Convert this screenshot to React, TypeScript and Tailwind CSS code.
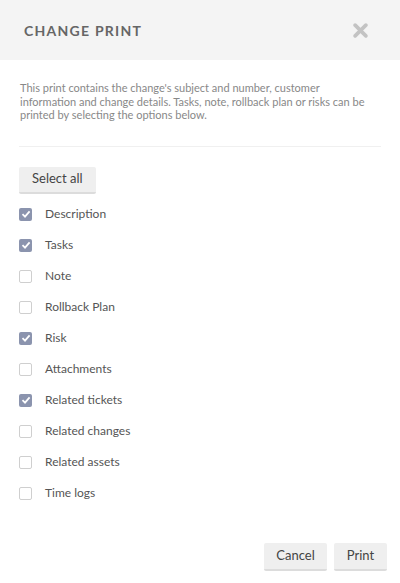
import { useState } from 'react';

const OPTIONS = [
  { label: 'Description', checked: true },
  { label: 'Tasks', checked: true },
  { label: 'Note', checked: false },
  { label: 'Rollback Plan', checked: false },
  { label: 'Risk', checked: true },
  { label: 'Attachments', checked: false },
  { label: 'Related tickets', checked: true },
  { label: 'Related changes', checked: false },
  { label: 'Related assets', checked: false },
  { label: 'Time logs', checked: false },
];

function Check({ on }: { on: boolean }) {
  return on ? (
    <span className="w-[13px] h-[13px] rounded-[2px] bg-[#8b94ae] flex items-center justify-center">
      <svg width="10" height="10" viewBox="0 0 10 10">
        <path d="M1.5 5.2 L4 7.6 L8.6 2.4" fill="none" stroke="white" strokeWidth="1.8" />
      </svg>
    </span>
  ) : (
    <span className="w-[13px] h-[13px] rounded-[2px] border border-[#cfcfcf] bg-white" />
  );
}

export default function App() {
  const [checked, setChecked] = useState(OPTIONS.map((o) => o.checked));

  return (
    <div className="w-[400px] h-[583px] bg-white flex flex-col font-['Lato','Open_Sans',sans-serif]">
      <div className="h-[60px] bg-[#f4f4f4] flex items-center justify-between pl-6 pr-[32px]">
        <h1 className="text-[14px] font-bold tracking-[1.25px] text-[#666]">CHANGE PRINT</h1>
        <svg width="15" height="15" viewBox="0 0 14 14">
          <path d="M2 2 L12 12 M12 2 L2 12" stroke="#c3c3c3" strokeWidth="3.4" strokeLinecap="round" />
        </svg>
      </div>

      <div className="px-[19px] pt-[21px] flex-1 flex flex-col">
        <p className="text-[11px] leading-[13.5px] text-[#888] pl-[1px] pr-2">
          This print contains the change's subject and number, customer information and change details. Tasks, note, rollback plan or risks can be printed by selecting the options below.
        </p>
        <div className="mt-[24px] h-px bg-[#f0f0f0]" />

        <button
          className="mt-5 self-start h-[27px] px-[13px] bg-[#efefef] border-b-2 border-[#dcdcdc] rounded-[2px] text-[13px] text-[#444]"
          onClick={() => setChecked(OPTIONS.map(() => true))}
        >
          Select all
        </button>

        <ul className="mt-[5px] flex flex-col">
          {OPTIONS.map((o, i) => (
            <li
              key={o.label}
              className="h-[31px] flex items-center gap-[13px] cursor-pointer"
              onClick={() => setChecked((c) => c.map((v, j) => (j === i ? !v : v)))}
            >
              <Check on={checked[i]} />
              <span className="text-[12px] text-[#555]">{o.label}</span>
            </li>
          ))}
        </ul>

        <div className="mt-auto mb-[12px] -mr-[6px] flex justify-end gap-[7px]">
          <button className="h-[28px] w-[63px] bg-[#efefef] border-b-2 border-[#dcdcdc] rounded-[2px] text-[13px] text-[#444]">
            Cancel
          </button>
          <button className="h-[28px] w-[53px] bg-[#efefef] border-b-2 border-[#dcdcdc] rounded-[2px] text-[13px] text-[#444]">
            Print
          </button>
        </div>
      </div>
    </div>
  );
}
